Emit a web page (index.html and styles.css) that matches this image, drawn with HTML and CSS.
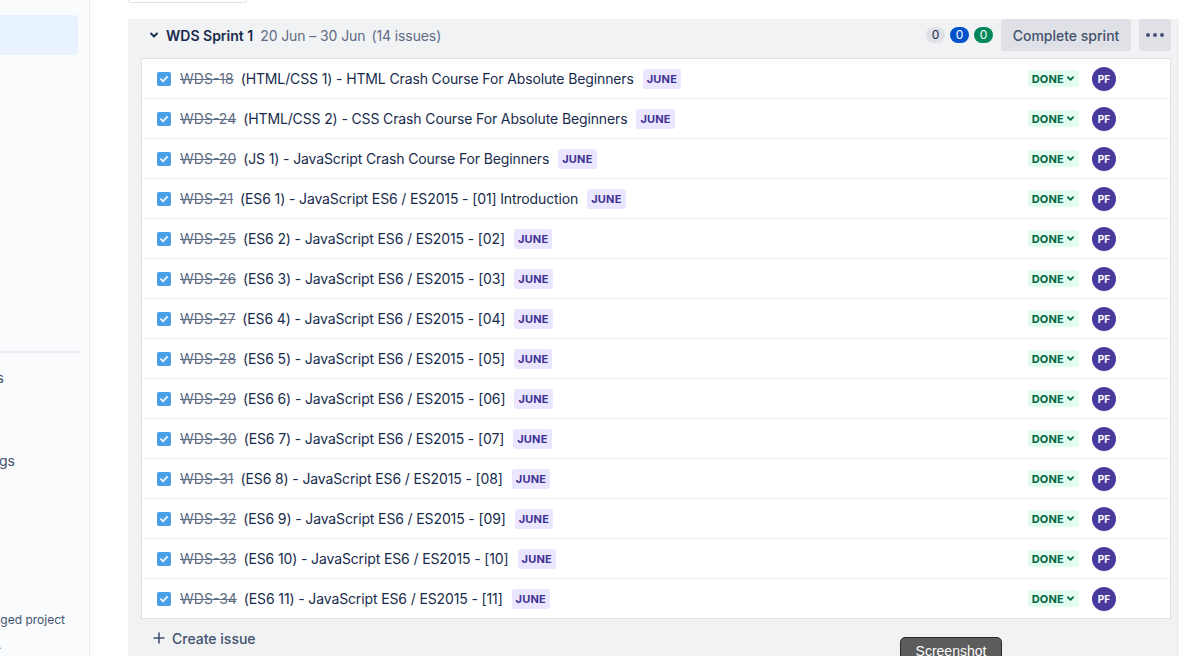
FILE: index.html
```html
<!DOCTYPE html>
<html>
<head>
<meta charset="utf-8">
<link rel="stylesheet" href="styles.css">
</head>
<body>
<aside class="sidebar">
  <div class="nav-active"></div>
  <div class="nav-sep"></div>
  <div class="clip clip-a"><span>Issues</span></div>
  <div class="clip clip-b"><span>Project settings</span></div>
  <div class="clip clip-c"><span>You're in a team-managed project</span></div>
  <div class="clip clip-d"><span>Learn more.</span></div>
</aside>
<main class="main">
  <div class="top-btn"></div>
  <section class="sprint">
    <header class="sprint-head">
      <svg class="chev" width="10" height="10" viewBox="0 0 10 10"><path d="M2 3.5 L5 6.5 L8 3.5" fill="none" stroke="#172b4d" stroke-width="1.8" stroke-linecap="round" stroke-linejoin="round"/></svg>
      <span class="sprint-name">WDS Sprint 1</span>
      <span class="sprint-dates">20 Jun – 30 Jun</span>
      <span class="sprint-count">(14 issues)</span>
      <span class="spacer"></span>
      <span class="pill pill-gray">0</span>
      <span class="pill pill-blue">0</span>
      <span class="pill pill-green">0</span>
      <button class="btn btn-complete">Complete sprint</button>
      <button class="btn btn-more"><svg width="18" height="4" viewBox="0 0 18 4"><circle cx="2" cy="2" r="2" fill="#42526e"/><circle cx="9" cy="2" r="2" fill="#42526e"/><circle cx="16" cy="2" r="2" fill="#42526e"/></svg></button>
    </header>
    <div class="issues" id="issues"></div>
    <div class="create"><svg width="12" height="12" viewBox="0 0 12 12"><path d="M6 0.5 V11.5 M0.5 6 H11.5" stroke="#42526e" stroke-width="1.6"/></svg><span>Create issue</span></div>
  </section>
</main>
<div class="tooltip">Screenshot</div>
<script>
var data = [
["WDS-18","(HTML/CSS 1) - HTML Crash Course For Absolute Beginners"],
["WDS-24","(HTML/CSS 2) - CSS Crash Course For Absolute Beginners"],
["WDS-20","(JS 1) - JavaScript Crash Course For Beginners"],
["WDS-21","(ES6 1) - JavaScript ES6 / ES2015 - [01] Introduction"],
["WDS-25","(ES6 2) - JavaScript ES6 / ES2015 - [02]"],
["WDS-26","(ES6 3) - JavaScript ES6 / ES2015 - [03]"],
["WDS-27","(ES6 4) - JavaScript ES6 / ES2015 - [04]"],
["WDS-28","(ES6 5) - JavaScript ES6 / ES2015 - [05]"],
["WDS-29","(ES6 6) - JavaScript ES6 / ES2015 - [06]"],
["WDS-30","(ES6 7) - JavaScript ES6 / ES2015 - [07]"],
["WDS-31","(ES6 8) - JavaScript ES6 / ES2015 - [08]"],
["WDS-32","(ES6 9) - JavaScript ES6 / ES2015 - [09]"],
["WDS-33","(ES6 10) - JavaScript ES6 / ES2015 - [10]"],
["WDS-34","(ES6 11) - JavaScript ES6 / ES2015 - [11]"]
];
var html = "";
data.forEach(function(d){
  html += '<div class="row">' +
    '<span class="cb"><svg width="10" height="10" viewBox="0 0 10 10"><path d="M2 5.2 L4.2 7.3 L8.2 2.8" fill="none" stroke="#fff" stroke-width="1.7" stroke-linecap="round" stroke-linejoin="round"/></svg></span>' +
    '<span class="key">' + d[0] + '</span>' +
    '<span class="summary">' + d[1] + '</span>' +
    '<span class="label">JUNE</span>' +
    '<span class="spacer"></span>' +
    '<span class="status">DONE<svg width="9" height="9" viewBox="0 0 10 10"><path d="M2 3.5 L5 6.5 L8 3.5" fill="none" stroke="#006644" stroke-width="1.8" stroke-linecap="round" stroke-linejoin="round"/></svg></span>' +
    '<span class="avatar">PF</span>' +
    '</div>';
});
document.getElementById("issues").innerHTML = html;
</script>
</body>
</html>
```
FILE: styles.css
```css
* { box-sizing: border-box; }
html, body { margin: 0; padding: 0; }
body {
  width: 1184px;
  height: 656px;
  overflow: hidden;
  display: flex;
  font-family: Inter, "Noto Sans", sans-serif;
  font-size: 14px;
  color: #172b4d;
  background: #fff;
}
.sidebar {
  width: 90px;
  flex: none;
  background: #fafbfc;
  border-right: 1px solid #ebecf0;
  padding-top: 15px;
  color: #42526e;
}
.nav-active {
  width: 78px;
  height: 40px;
  background: #e9f2ff;
  border-radius: 0 4px 4px 0;
}
.nav-sep {
  width: 80px;
  height: 2px;
  background: #ebecf0;
  margin-top: 296px;
}
.clip {
  display: flex;
  justify-content: flex-end;
  overflow: hidden;
  white-space: nowrap;
  height: 20px;
  line-height: 20px;
}
.clip span { flex: none; }
.clip-a { width: 4px; margin-top: 15px; }
.clip-b { width: 15px; margin-top: 63px; }
.clip-c { width: 65px; margin-top: 139px; font-size: 12px; }
.clip-d { width: 2px; margin-top: 5px; font-size: 12px; color: #97a0af; }

.main {
  flex: 1;
  padding: 0 5px 0 38px;
  height: 656px;
  overflow: hidden;
}
.top-btn {
  width: 119px;
  height: 3px;
  border: 1px solid #dfe1e6;
  border-top: none;
  border-radius: 0 0 3px 3px;
  background: #fff;
}
.sprint {
  margin-top: 16px;
  background: #f1f2f4;
  padding: 0 8px 0 13px;
  height: 637px;
}
.sprint-head {
  height: 32px;
  display: flex;
  align-items: center;
}
.chev { margin-left: 8px; margin-right: 7px; }
.sprint-name { font-weight: 600; margin-right: 7px; }
.sprint-dates { color: #5e6c84; margin-right: 6px; letter-spacing: -0.1px; }
.sprint-count { color: #5e6c84; letter-spacing: -0.1px; }
.spacer { flex: 1; }
.pill {
  min-width: 19px;
  height: 16px;
  border-radius: 8px;
  font-size: 12px;
  line-height: 16px;
  text-align: center;
  margin-left: 5px;
}
.pill-gray { background: #dfe1e6; color: #172b4d; }
.pill-blue { background: #0052cc; color: #fff; }
.pill-green { background: #00875a; color: #fff; }
.btn {
  border: none;
  height: 32px;
  border-radius: 3px;
  background: #dfe1e6;
  font-family: inherit;
  font-size: 14px;
  font-weight: 500;
  color: #42526e;
  margin-left: 8px;
  padding: 0;
}
.btn-complete { width: 130px; }
.btn-more { width: 32px; display: flex; align-items: center; justify-content: center; }

.issues {
  margin-top: 7px;
  background: #fff;
  border: 1px solid #dfe1e6;
}
.row {
  height: 40px;
  border-bottom: 1px solid #ebecf0;
  display: flex;
  align-items: center;
  padding: 0 54px 0 15px;
}
.row:last-child { border-bottom: none; height: 39px; }
.cb {
  width: 14px;
  height: 14px;
  border-radius: 2px;
  background: #4a9fe6;
  display: flex;
  align-items: center;
  justify-content: center;
  margin-right: 9px;
}
.key {
  color: #5e6c84;
  text-decoration: line-through;
  margin-right: 7px;
}
.summary { margin-right: 9px; white-space: nowrap; letter-spacing: -0.13px; }
.label {
  background: #eae6ff;
  color: #403294;
  font-size: 11px;
  font-weight: 700;
  height: 20px;
  line-height: 20px;
  padding: 0 4px;
  border-radius: 3px;
  letter-spacing: 0.2px;
}
.status {
  background: #e3fcef;
  color: #006644;
  font-size: 11px;
  font-weight: 700;
  height: 17px;
  display: flex;
  align-items: center;
  gap: 2px;
  padding: 0 4px;
  border-radius: 3px;
  margin-right: 13px;
  letter-spacing: 0.2px;
}
.avatar {
  width: 24px;
  height: 24px;
  border-radius: 50%;
  background: #4a3a9e;
  color: #fff;
  font-size: 10px;
  font-weight: 700;
  display: flex;
  align-items: center;
  justify-content: center;
}
.create {
  height: 38px;
  display: flex;
  align-items: center;
  padding-left: 12px;
  gap: 7px;
  color: #42526e;
  font-weight: 500;
}
.tooltip {
  position: absolute;
  left: 900px;
  top: 637px;
  width: 102px;
  height: 30px;
  background: #5c5c5c;
  border: 1px solid #2a2a2a;
  border-radius: 5px;
  color: #fff;
  font-family: "Liberation Sans", sans-serif;
  font-size: 14px;
  text-align: center;
  line-height: 26px;
}
```
